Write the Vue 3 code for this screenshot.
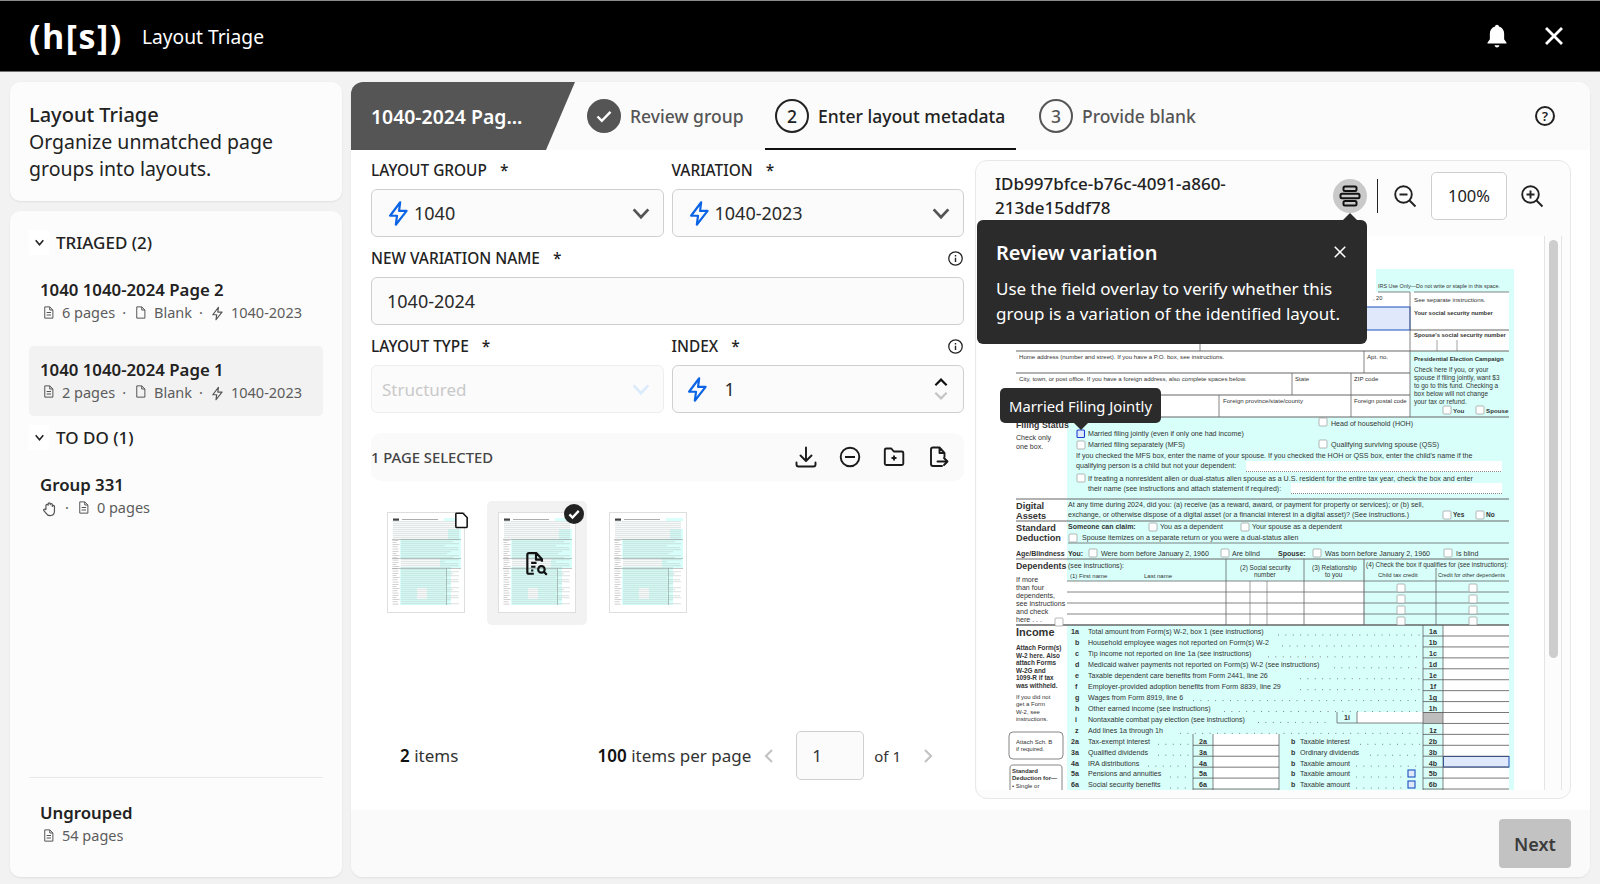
<script setup>
// Form page drawn at screen coordinates: the svg viewBox starts where the viewer's page starts
const sections = [
  { title: 'TRIAGED (2)', items: [
    { name: '1040 1040-2024 Page 2', pages: '6 pages', variation: '1040-2023' },
    { name: '1040 1040-2024 Page 1', pages: '2 pages', variation: '1040-2023', active: true },
  ] },
  { title: 'TO DO (1)', items: [
    { name: 'Group 331', pages: '0 pages', manual: true },
  ] },
]

const cyan = [
  [1376, 269, 138, 23], [1509, 292, 5, 59], [1410, 351, 104, 66], [1067, 417, 447, 373],
]
const whites = [
  [1246, 461, 256, 11], [1291, 483, 211, 11], [1067, 581, 297, 44], [1443, 625, 66, 165],
  [1357, 712, 66, 11], [1213, 734, 66, 55],
]

const hr = [
  [1016, 351, 1509, 351, 1], [1016, 373, 1410, 373, 1], [1016, 395, 1410, 395, 1], [1016, 417, 1509, 417, 1.2],
  [1016, 499, 1509, 499, 1.2], [1016, 521, 1509, 521, 1], [1068, 543, 1509, 543, .8], [1016, 559, 1509, 559, 1],
  [1067, 581, 1509, 581, .8], [1067, 592, 1509, 592, .8], [1067, 603, 1509, 603, .8], [1067, 614, 1509, 614, .8],
  [1016, 625, 1509, 625, 1.4], [1414, 292, 1509, 292, .8], [1378, 292, 1410, 292, .8], [1410, 330, 1509, 330, 1],
  [1200, 340, 1200, 351, .8], [1364, 351, 1364, 373, .8], [1410, 292, 1410, 417, .8], [1292, 373, 1292, 395, .8],
  [1351, 373, 1351, 417, .8], [1219, 395, 1219, 417, .8], [1226, 559, 1226, 625, .8], [1250, 581, 1250, 625, .6],
  [1267, 581, 1267, 625, .6], [1304, 559, 1304, 625, .8], [1364, 559, 1364, 625, 1], [1436, 568, 1436, 625, .8],
  [1423, 625, 1423, 790, .8], [1443, 625, 1443, 790, .8], [1337, 712, 1337, 723, .8], [1357, 712, 1357, 723, .8],
  [1337, 723, 1423, 723, .8], [1193, 734, 1193, 790, .8], [1213, 734, 1213, 790, .8], [1279, 734, 1279, 790, .8],
  [1437, 340, 1437, 351, .6], [1457, 340, 1457, 351, .6],
]

const boxes = [
  [1443, 406], [1476, 406], [1319, 418], [1077, 441], [1319, 440], [1077, 474], [1443, 511], [1476, 511],
  [1149, 523], [1241, 523], [1069, 534], [1089, 549], [1221, 549], [1313, 549], [1444, 549],
  [1397, 584], [1397, 595], [1397, 606], [1397, 617], [1469, 584], [1469, 595], [1469, 606], [1469, 617], [1055, 618],
]

const labels = [
  ['IRS Use Only—Do not write or staple in this space.', 1378, 288, 5.4], [', 20', 1373, 300, 5.6],
  ['See separate instructions.', 1414, 302, 6.2], ['Your social security number', 1414, 315, 5.9, 1],
  ["Spouse's social security number", 1414, 337, 5.9, 1], ['Home address (number and street). If you have a P.O. box, see instructions.', 1019, 359, 6.1],
  ['Apt. no.', 1367, 359, 6.1], ['Presidential Election Campaign', 1414, 361, 6, 1], ['Check here if you, or your', 1414, 372, 6.5],
  ['spouse if filing jointly, want $3', 1414, 380, 6.5], ['to go to this fund. Checking a', 1414, 388, 6.5], ['box below will not change', 1414, 396, 6.5],
  ['your tax or refund.', 1414, 404, 6.5], ['You', 1453, 413, 6.2, 1], ['Spouse', 1486, 413, 6.2, 1],
  ['City, town, or post office. If you have a foreign address, also complete spaces below.', 1019, 381, 6.1], ['State', 1295, 381, 6.1], ['ZIP code', 1354, 381, 6.1],
  ['Foreign province/state/county', 1223, 403, 6.1], ['Foreign postal code', 1354, 403, 6],
  ['Head of household (HOH)', 1331, 426], ['Filing Status', 1016, 428, 8.8, 1], ['Married filing jointly (even if only one had income)', 1088, 436],
  ['Check only', 1016, 440], ['one box.', 1016, 449], ['Married filing separately (MFS)', 1088, 447], ['Qualifying surviving spouse (QSS)', 1331, 447],
  ["If you checked the MFS box, enter the name of your spouse. If you checked the HOH or QSS box, enter the child's name if the", 1076, 458],
  ['qualifying person is a child but not your dependent:', 1076, 468],
  ['If treating a nonresident alien or dual-status alien spouse as a U.S. resident for the entire tax year, check the box and enter', 1088, 481],
  ['their name (see instructions and attach statement if required):', 1088, 491],
  ['Digital', 1016, 509, 9.2, 1], ['Assets', 1016, 519, 9.2, 1], ['Standard', 1016, 531, 9.2, 1], ['Deduction', 1016, 541, 9.2, 1],
  ['At any time during 2024, did you: (a) receive (as a reward, award, or payment for property or services); or (b) sell,', 1068, 507],
  ['exchange, or otherwise dispose of a digital asset (or a financial interest in a digital asset)? (See instructions.)', 1068, 517],
  ['Yes', 1453, 517, 6.6, 1], ['No', 1486, 517, 6.6, 1], ['Someone can claim:', 1068, 529, 7, 1], ['You as a dependent', 1160, 529], ['Your spouse as a dependent', 1252, 529],
  ['Spouse itemizes on a separate return or you were a dual-status alien', 1082, 540],
  ['Age/Blindness', 1016, 556, 7, 1], ['You:', 1068, 556, 7, 1], ['Were born before January 2, 1960', 1101, 556], ['Are blind', 1232, 556],
  ['Spouse:', 1278, 556, 7, 1], ['Was born before January 2, 1960', 1325, 556], ['Is blind', 1456, 556],
  ['Dependents', 1016, 569, 8.8, 1], ['(see instructions):', 1068, 568], ['(2) Social security', 1240, 570, 6.4], ['number', 1254, 577, 6.4], ['(3) Relationship', 1312, 570, 6.4], ['to you', 1325, 577, 6.4],
  ['(4) Check the box if qualifies for (see instructions):', 1366, 567, 6.4], ['Child tax credit', 1378, 577, 6], ['Credit for other dependents', 1438, 577, 5.5],
  ['(1) First name', 1070, 578, 6], ['Last name', 1144, 578, 6], ['If more', 1016, 582], ['than four', 1016, 590], ['dependents,', 1016, 598], ['see instructions', 1016, 606],
  ['and check', 1016, 614], ['here  .  .  .', 1016, 622], ['Income', 1016, 636, 11, 1],
  ['Attach Form(s)', 1016, 650, 6.4, 1], ['W-2 here. Also', 1016, 658, 6.4, 1], ['attach Forms', 1016, 665, 6.4, 1], ['W-2G and', 1016, 673, 6.4, 1],
  ['1099-R if tax', 1016, 680, 6.4, 1], ['was withheld.', 1016, 688, 6.4, 1], ['If you did not', 1016, 699, 6], ['get a Form', 1016, 706, 6], ['W-2, see', 1016, 714, 6], ['instructions.', 1016, 721, 6],
  ['Attach Sch. B', 1016, 744, 6], ['if required.', 1016, 751, 6], ['Standard', 1012, 773, 6, 1], ['Deduction for—', 1012, 780, 6, 1], ['• Single or', 1012, 788, 6],
]

// no, text, right box, where the dots start, second column: text, dots start, dots end
const income = [
  ['1a', 'Total amount from Form(s) W-2, box 1 (see instructions)', '1a', 1278],
  ['b', 'Household employee wages not reported on Form(s) W-2', '1b', 1282],
  ['c', 'Tip income not reported on line 1a (see instructions)', '1c', 1268],
  ['d', 'Medicaid waiver payments not reported on Form(s) W-2 (see instructions)', '1d', 1334],
  ['e', 'Taxable dependent care benefits from Form 2441, line 26', '1e', 1300],
  ['f', 'Employer-provided adoption benefits from Form 8839, line 29', '1f', 1300],
  ['g', 'Wages from Form 8919, line 6', '1g', 1193],
  ['h', 'Other earned income (see instructions)', '1h', 1224],
  ['i', 'Nontaxable combat pay election (see instructions)', '', 1258],
  ['z', 'Add lines 1a through 1h', '1z', 1180],
  ['2a', 'Tax-exempt interest', '2b', 1158, 'Taxable interest', 1360, 1420],
  ['3a', 'Qualified dividends', '3b', 1158, 'Ordinary dividends', 1370, 1420],
  ['4a', 'IRA distributions', '4b', 1148, 'Taxable amount', 1356, 1420],
  ['5a', 'Pensions and annuities', '5b', 1170, 'Taxable amount', 1356, 1404],
  ['6a', 'Social security benefits', '6b', 1170, 'Taxable amount', 1356, 1404],
].map((row, i) => ({
  no: row[0], text: row[1], right: row[2], dotsFrom: row[3], second: row[4], secondFrom: row[5], secondTo: row[6],
  y: 634.4 + i * 10.93, line: 636 + i * 10.93, dotY: 635 + i * 10.93,
}))

// Thumbnail of the whole page: text rows are only grey strokes at this size
const thumbRows = Array.from({ length: 42 }, (_, i) => ({
  y: 9.6 + i * 2,
  x: i < 9 ? 6 : 14,
  w: i < 9 ? 66 : [46, 58, 52, 58, 44, 57, 58, 50][i % 8],
}))
const thumbLeft = Array.from({ length: 30 }, (_, i) => ({
  y: 28 + i * 2.2,
  w: [6, 4, 7, 5, 6][i % 5],
}))
const thumbs = [{ tag: 'blank' }, { tag: 'selected', active: true }, { tag: '' }]
</script>

<template>
  <div class="app">
    <svg class="sprite" aria-hidden="true">
      <symbol id="bolt" viewBox="0 0 24 24"><path d="M13.500 2 4.500 14h6.200L9.600 22l9.600-12.300h-6.700z" fill="none" stroke="currentColor" stroke-width="1.900" stroke-linejoin="round" /></symbol>
      <symbol id="chev" viewBox="0 0 24 24"><path d="m4 8 8 8.500L20 8" fill="none" stroke="currentColor" stroke-width="3" /></symbol>
      <symbol id="doc" viewBox="0 0 24 24"><path d="M6 3h8l5 5v13H6zM14 3v5h5M9 12h7M9 16h7" fill="none" stroke="currentColor" stroke-width="1.600" stroke-linejoin="round" /></symbol>
      <symbol id="blank" viewBox="0 0 24 24"><path d="M6 3h8l5 5v13H6zM14 3v5h5" fill="none" stroke="currentColor" stroke-width="1.600" stroke-linejoin="round" /></symbol>
      <symbol id="info" viewBox="0 0 24 24"><circle cx="12" cy="12" r="9.500" fill="none" stroke="currentColor" stroke-width="1.800" /><path d="M12 11v6M12 7v2" stroke="currentColor" stroke-width="2" /></symbol>
    </svg>

    <header class="topbar">
      <span class="logo">(h[s])</span>
      <span class="app-name">Layout Triage</span>
      <div class="topbar-actions">
        <svg class="bell" viewBox="0 0 24 24"><path d="M12 1.500c1 0 1.700.7 1.800 1.700C17 4 18.600 6.600 18.600 10v5l2.200 3.200v.8H3.200v-.8L5.400 15v-5c0-3.400 1.600-6 4.800-6.800.1-1 .8-1.700 1.800-1.700zM9.800 20.500h4.400c0 1.200-1 2-2.200 2s-2.200-.8-2.200-2z" fill="#fff" /></svg>
        <svg class="close" viewBox="0 0 24 24"><path d="m4 4 16 16M20 4 4 20" stroke="#fff" stroke-width="2.800" /></svg>
      </div>
    </header>

    <div class="workspace">
      <aside class="sidebar">
        <section class="card intro">
          <h1>Layout Triage</h1>
          <p>Organize unmatched page groups into layouts.</p>
        </section>
        <section class="card groups">
          <template v-for="section in sections" :key="section.title">
            <div class="group-head">
              <span class="head-chev"><svg viewBox="0 0 24 24"><path d="m5 8 7 8 7-8" fill="none" stroke="#222" stroke-width="3" /></svg></span>
              {{ section.title }}
            </div>
            <div v-for="item in section.items" :key="item.name" class="group-item" :class="{ active: item.active }">
              <div class="item-name">{{ item.name }}</div>
              <div class="item-meta">
                <template v-if="item.manual">
                  <svg class="meta-icon hand" viewBox="0 0 24 24"><path d="M7 13V7.500a1.500 1.500 0 0 1 3 0V5.500a1.500 1.500 0 0 1 3 0V6.500a1.500 1.500 0 0 1 3 0V9a1.500 1.500 0 0 1 3 0v7c0 4-2.500 6-6 6-3 0-4.500-1-6-3.500L4 15c-.8-1.500 1.200-2.800 2.300-1.500z" fill="none" stroke="#555" stroke-width="1.700" stroke-linejoin="round" /></svg>
                  <span class="dot">·</span>
                </template>
                <svg class="meta-icon"><use href="#doc" /></svg>
                <span>{{ item.pages }}</span>
                <template v-if="item.variation">
                  <span class="dot">·</span>
                  <svg class="meta-icon"><use href="#blank" /></svg>
                  <span>Blank</span>
                  <span class="dot">·</span>
                  <svg class="meta-icon bolt-small"><use href="#bolt" /></svg>
                  <span>{{ item.variation }}</span>
                </template>
              </div>
            </div>
          </template>
          <div class="ungrouped">
            <div class="group-item">
              <div class="item-name">Ungrouped</div>
              <div class="item-meta">
                <svg class="meta-icon"><use href="#doc" /></svg>
                <span>54 pages</span>
              </div>
            </div>
          </div>
        </section>
      </aside>

      <main class="panel">
        <nav class="steps">
          <div class="doc-tab">1040-2024 Pag...</div>
          <div class="step done">
            <span class="step-circle"><svg viewBox="0 0 24 24"><path d="m5.500 12.500 4.300 4.300 8.700-9" fill="none" stroke="#fff" stroke-width="2.400" /></svg></span>
            Review group
          </div>
          <div class="step current">
            <span class="step-circle">2</span>
            Enter layout metadata
          </div>
          <div class="step todo">
            <span class="step-circle">3</span>
            Provide blank
          </div>
          <span class="help">?</span>
        </nav>

        <div class="content">
          <div class="form-col">
            <div class="fields">
              <div class="field">
                <label>LAYOUT GROUP <i>*</i></label>
                <div class="control">
                  <svg class="bolt"><use href="#bolt" /></svg>
                  <span>1040</span>
                  <svg class="chev"><use href="#chev" /></svg>
                </div>
              </div>
              <div class="field">
                <label>VARIATION <i>*</i></label>
                <div class="control">
                  <svg class="bolt"><use href="#bolt" /></svg>
                  <span>1040-2023</span>
                  <svg class="chev"><use href="#chev" /></svg>
                </div>
              </div>
              <div class="field wide">
                <label>NEW VARIATION NAME <i>*</i><svg class="info"><use href="#info" /></svg></label>
                <div class="control plain"><span>1040-2024</span></div>
              </div>
              <div class="field">
                <label>LAYOUT TYPE <i>*</i></label>
                <div class="control disabled">
                  <span>Structured</span>
                  <svg class="chev"><use href="#chev" /></svg>
                </div>
              </div>
              <div class="field">
                <label>INDEX <i>*</i><svg class="info"><use href="#info" /></svg></label>
                <div class="control index">
                  <svg class="bolt"><use href="#bolt" /></svg>
                  <span>1</span>
                  <div class="stepper">
                    <svg viewBox="0 0 24 24"><path d="m3 18 9-9 9 9" fill="none" stroke="#111" stroke-width="3.400" /></svg>
                    <svg viewBox="0 0 24 24"><path d="m3 6 9 9 9-9" fill="none" stroke="#c4c4c4" stroke-width="3.400" /></svg>
                  </div>
                </div>
              </div>
            </div>

            <div class="selection-bar">
              <span>1 PAGE SELECTED</span>
              <div class="selection-actions">
                <svg viewBox="0 0 24 24"><path d="M12 2.500v13M6.500 10.500l5.500 5.500 5.500-5.500M2.500 17.500v2c0 1.200.8 2 2 2h15c1.200 0 2-.8 2-2v-2" fill="none" stroke="#1a1a1a" stroke-width="1.900" stroke-linecap="round" stroke-linejoin="round" /></svg>
                <svg viewBox="0 0 24 24"><circle cx="12" cy="12" r="9.300" fill="none" stroke="#1a1a1a" stroke-width="1.900" /><path d="M7 12h10" stroke="#1a1a1a" stroke-width="2" /></svg>
                <svg viewBox="0 0 24 24"><path d="M2.800 5c0-.9.600-1.500 1.500-1.500h5l2.500 3h8c1 0 1.500.6 1.500 1.500v10.500c0 .9-.6 1.500-1.500 1.500H4.300c-.9 0-1.500-.6-1.500-1.500zM12 10.500v5M9.500 13h5" fill="none" stroke="#1a1a1a" stroke-width="1.900" stroke-linejoin="round" /></svg>
                <svg viewBox="0 0 24 24"><path d="M16 21H7c-1.200 0-2-.8-2-2V4.500c0-1.200.8-2 2-2h6.500l5 5.500v4M13.500 2.500V8h5M11.500 16.500h10M18 13l3.500 3.500L18 20" fill="none" stroke="#1a1a1a" stroke-width="1.900" stroke-linejoin="round" stroke-linecap="round" /></svg>
              </div>
            </div>

            <div class="thumbs">
              <div v-for="thumb in thumbs" :key="thumb.tag" class="thumb-tile" :class="{ active: thumb.active }">
                <svg class="thumb" viewBox="0 0 78 101">
                  <rect x=".5" y=".5" width="77" height="100" fill="#fff" stroke="#dedede" />
                  <path d="M57 6h17v3H57zM61 17h13v10H61zM13 27h61v66H13z" fill="#d8fffa" />
                  <path d="M13 47h40v8H13zM64 56h10v37H64zM30 76h10v11H30z" fill="#fff" />
                  <rect x="6" y="6.500" width="6" height="2.200" fill="#444" />
                  <rect x="15" y="7" width="36" height=".8" fill="#999" />
                  <rect v-for="row in thumbRows" :key="row.y" :x="row.x" :y="row.y" :width="row.w" height=".5" fill="#b4c2c0" />
                  <rect v-for="row in thumbLeft" :key="row.y" x="5.500" :y="row.y" :width="row.w" height=".5" fill="#a4a4a4" />
                  <rect x="5" y="27" width="69" height=".5" fill="#888" />
                  <rect x="5" y="46" width="69" height=".5" fill="#888" />
                  <rect x="5" y="56" width="69" height=".5" fill="#888" />
                  <rect x="59" y="56" width=".8" height="37" fill="#9fb1ae" />
                </svg>
                <svg v-if="thumb.tag === 'blank'" class="thumb-flag" viewBox="0 0 24 24"><path d="M5 2.500h9l6 6V21c0 1-.6 1.500-1.500 1.500h-13C4.600 22.500 4 22 4 21V3.500c0-.6.400-1 1-1z" fill="#fff" stroke="#111" stroke-width="2.200" stroke-linejoin="round" /></svg>
                <svg v-if="thumb.active" class="thumb-check" viewBox="0 0 24 24"><circle cx="12" cy="12" r="12" fill="#222" /><path d="m6.500 12.500 3.700 3.700 7.500-8" fill="none" stroke="#fff" stroke-width="2.800" /></svg>
                <svg v-if="thumb.active" class="thumb-view" viewBox="0 0 24 24"><path d="M10 21H5.500C4.600 21 4 20.400 4 19.500v-16C4 2.600 4.600 2 5.500 2h7l5 5.500V10M12 2v6h5.500M7.500 11h5M7.500 14.500h4M7.500 18h2" fill="none" stroke="#111" stroke-width="2" stroke-linejoin="round" /><circle cx="17" cy="17" r="3" fill="none" stroke="#111" stroke-width="2" /><path d="m19.500 19.500 2.500 2.500" stroke="#111" stroke-width="2" /></svg>
              </div>
            </div>

            <div class="pager">
              <span><b>2</b> items</span>
              <div class="pager-right">
                <span><b>100</b> items per page</span>
                <svg class="pager-chev" viewBox="0 0 24 24"><path d="M16 4 8 12l8 8" fill="none" stroke="#c4c4c4" stroke-width="3" /></svg>
                <div class="page-input">1</div>
                <span class="of">of 1</span>
                <svg class="pager-chev" viewBox="0 0 24 24"><path d="m8 4 8 8-8 8" fill="none" stroke="#c4c4c4" stroke-width="3" /></svg>
              </div>
            </div>
          </div>

          <section class="viewer">
            <div class="viewer-head">
              <div class="viewer-title">IDb997bfce-b76c-4091-a860-<br />213de15ddf78</div>
              <button class="overlay-btn">
                <svg viewBox="0 0 24 24"><g fill="none" stroke="#111" stroke-width="2"><rect x="5.500" y="2.500" width="13" height="4.500" rx="1.500" /><rect x="2.500" y="9.700" width="19" height="4.500" rx="1.500" /><rect x="5.500" y="17" width="13" height="4.500" rx="1.500" /></g></svg>
              </button>
              <span class="divider"></span>
              <svg class="zoom-icon" viewBox="0 0 24 24"><circle cx="10.500" cy="10.500" r="8.300" fill="none" stroke="#222" stroke-width="1.900" /><path d="m16.500 16.500 6 6M6.500 10.500h8" stroke="#222" stroke-width="1.900" /></svg>
              <div class="zoom-value">100%</div>
              <svg class="zoom-icon" viewBox="0 0 24 24"><circle cx="10.500" cy="10.500" r="8.300" fill="none" stroke="#222" stroke-width="1.900" /><path d="m16.500 16.500 6 6M6.500 10.500h8M10.500 6.500v8" stroke="#222" stroke-width="1.900" /></svg>
            </div>

            <div class="doc-area">
              <div class="doc-stage">
                <svg class="form-page" viewBox="977 236 567 554">
                  <rect x="977" y="236" width="567" height="554" fill="#fff" />
                  <rect v-for="r in cyan" :key="r.join()" :x="r[0]" :y="r[1]" :width="r[2]" :height="r[3]" fill="#d8fffa" />
                  <rect v-for="r in whites" :key="r.join()" :x="r[0]" :y="r[1]" :width="r[2]" :height="r[3]" fill="#fff" />
                  <rect x="1364" y="581" width="150" height="44" fill="#d8fffa" />
                  <rect x="1423" y="712" width="20" height="11" fill="#bdbdbd" />
                  <rect x="1300" y="307" width="110" height="23" fill="#dfe9fb" stroke="#1a4fc0" stroke-width="1" />
                  <rect x="1443.500" y="756.500" width="65.500" height="10.500" fill="#dfe9fb" stroke="#1a4fc0" stroke-width="1" />
                  <path d="M1246 471.500h256M1291 493.500h211" stroke="#555" stroke-width=".7" stroke-dasharray="1 1" />
                  <line v-for="l in hr" :key="l.join()" :x1="l[0]" :y1="l[1]" :x2="l[2]" :y2="l[3]" :stroke-width="l[4]" stroke="#666" />
                  <rect x="1009" y="732" width="54" height="27" rx="4" fill="#fff" stroke="#666" stroke-width=".8" />
                  <path d="M1010 790v-22c0-2 1-3 3-3h46c2 0 3 1 3 3v22" fill="none" stroke="#666" stroke-width=".8" />
                  <rect v-for="b in boxes" :key="b.join()" :x="b[0]" :y="b[1]" width="8" height="8" rx="1" fill="#fff" stroke="#999" stroke-width=".7" />
                  <rect x="1077" y="430" width="7.500" height="7.500" rx="1" fill="#dfe9fb" stroke="#1a40d0" stroke-width="1.100" />
                  <rect x="1408" y="770" width="7" height="7" fill="#dfe9fb" stroke="#1a50c0" stroke-width="1.100" />
                  <rect x="1408" y="781" width="7" height="7" fill="#dfe9fb" stroke="#1a50c0" stroke-width="1.100" />
                  <g class="form-text">
                    <text v-for="t in labels" :key="t[0] + t[2]" :x="t[1]" :y="t[2]" :font-size="t[3] || 7.100" :font-weight="t[4] ? 700 : 400">{{ t[0] }}</text>
                    <template v-for="row in income" :key="row.no">
                      <text :x="row.no.length > 1 ? 1071 : 1075" :y="row.y" font-weight="700">{{ row.no }}</text>
                      <text x="1088" :y="row.y">{{ row.text }}</text>
                      <text x="1433" text-anchor="middle" :y="row.y" font-weight="700">{{ row.right }}</text>
                      <line :x1="row.dotsFrom" :y1="row.dotY" :x2="row.second ? 1190 : (row.no === 'i' ? 1332 : 1420)" :y2="row.dotY" class="dots" />
                      <template v-if="row.second">
                        <text x="1203" text-anchor="middle" :y="row.y" font-weight="700">{{ row.no }}</text>
                        <text x="1291" :y="row.y" font-weight="700">b</text>
                        <text x="1300" :y="row.y">{{ row.second }}</text>
                        <line :x1="row.secondFrom" :y1="row.dotY" :x2="row.secondTo" :y2="row.dotY" class="dots" />
                      </template>
                      <line x1="1423" :y1="row.line" x2="1509" :y2="row.line" stroke="#555" stroke-width=".8" />
                      <line v-if="row.second" x1="1193" :y1="row.line" x2="1279" :y2="row.line" stroke="#555" stroke-width=".8" />
                    </template>
                    <text x="1347" y="720" text-anchor="middle" font-weight="700">1i</text>
                  </g>
                </svg>

                <div class="hint">
                  Married Filing Jointly
                  <span class="hint-arrow"></span>
                </div>
              </div>
              <div class="scroll-track"><div class="scroll-thumb"></div></div>
            </div>

            <div class="popover">
              <span class="popover-arrow"></span>
              <div class="popover-head">
                <strong>Review variation</strong>
                <svg viewBox="0 0 24 24"><path d="m5 5 14 14M19 5 5 19" stroke="#fff" stroke-width="2" /></svg>
              </div>
              <p>Use the field overlay to verify whether this group is a variation of the identified layout.</p>
            </div>
          </section>
        </div>

        <footer class="panel-foot">
          <button class="next">Next</button>
        </footer>
      </main>
    </div>
  </div>
</template>

<style scoped>
.app {
  width: 1600px;
  height: 884px;
  display: flex;
  flex-direction: column;
  background: #f2f2f2;
  color: #222;
  font-family: "Noto Sans", "Open Sans", sans-serif;
  overflow: hidden;
}
.sprite { display: none; }

/* Top bar */
.topbar {
  height: 72px;
  box-sizing: border-box;
  border-top: 1px solid #8a8a8a;
  border-bottom: 1px solid #6f6f6f;
  background: #000;
  color: #fff;
  display: flex;
  align-items: center;
  padding: 0 34px 0 29px;
}
.logo {
  font-family: "Open Sans", sans-serif;
  font-weight: 700;
  font-size: 34px;
  letter-spacing: 1.500px;
  width: 113px;
}
.app-name { font-size: 19.200px; }
.topbar-actions {
  margin-left: auto;
  display: flex;
  align-items: center;
  gap: 32px;
}
.bell { width: 26px; height: 26px; }
.close { width: 24px; height: 24px; }

.workspace {
  flex: 1;
  min-height: 0;
  display: flex;
  gap: 9px;
  padding: 10px 10px 7px;
}

/* Sidebar */
.sidebar {
  width: 332px;
  flex: none;
  display: flex;
  flex-direction: column;
  gap: 10px;
}
.card {
  background: #fcfcfc;
  border-radius: 10px;
  box-shadow: 0 1px 2px rgba(0, 0, 0, 0.08);
}
.intro {
  height: 119px;
  box-sizing: border-box;
  padding: 20px 40px 0 19px;
}
.intro h1 {
  margin: 0;
  font-size: 20px;
  font-weight: 500;
  line-height: 26px;
}
.intro p {
  margin: 0;
  font-size: 19.500px;
  line-height: 27px;
}
.groups {
  flex: 1;
  display: flex;
  flex-direction: column;
  padding: 19px 19px 18px;
}
.group-head {
  height: 25px;
  display: flex;
  align-items: center;
  gap: 7px;
  font-size: 17px;
  font-weight: 500;
  margin-bottom: 11px;
}
.head-chev {
  width: 20px;
  height: 25px;
  background: #fff;
  display: flex;
  align-items: center;
  justify-content: center;
}
.head-chev svg { width: 13px; height: 13px; }
.group-item {
  height: 70px;
  box-sizing: border-box;
  padding: 13px 11px;
  border-radius: 5px;
  margin-bottom: 9.500px;
}
.group-item.active { background: #f2f2f2; }
.item-name {
  font-size: 16.800px;
  font-weight: 600;
  line-height: 22px;
}
.item-meta {
  display: flex;
  align-items: center;
  gap: 6px;
  padding-left: 1px;
  font-size: 14.500px;
  line-height: 22px;
  color: #5c5c5c;
}
.meta-icon {
  width: 15px;
  height: 15px;
  flex: none;
  color: #555;
}
.meta-icon.hand { width: 17px; height: 17px; margin-top: 3px; }
.bolt-small { margin-top: 3px; }
.dot { margin: 0 1px; }
.ungrouped {
  margin-top: auto;
  border-top: 1px solid #e8e8e8;
  padding-top: 11px;
}
.ungrouped .group-item { margin-bottom: 0; }

/* Main panel */
.panel {
  flex: 1;
  min-width: 0;
  display: flex;
  flex-direction: column;
  background: #fff;
  border-radius: 12px;
  box-shadow: 0 1px 2px rgba(0, 0, 0, 0.08);
  overflow: hidden;
}
.steps {
  height: 68px;
  flex: none;
  display: flex;
  align-items: stretch;
  background: #fbfbfb;
  font-size: 17.500px;
  font-weight: 500;
  white-space: nowrap;
}
.doc-tab {
  width: 224px;
  box-sizing: border-box;
  padding-left: 20px;
  margin-right: 12px;
  background: #555;
  clip-path: polygon(0 0, 100% 0, 195px 100%, 0 100%);
  color: #fff;
  font-size: 19.400px;
  font-weight: 600;
  display: flex;
  align-items: center;
}
.step {
  display: flex;
  align-items: center;
  gap: 9px;
  color: #555;
  padding: 0 10px 2px;
  height: 68px;
  box-sizing: border-box;
}
.step.done { padding: 0; margin-right: 22px; width: 156px; }
.step.current {
  width: 251px;
  color: #222;
  border-bottom: 2px solid #111;
  margin-right: 23px;
  padding: 2px 10px 0 10px;
}
.step.todo { padding: 0; }
.step-circle {
  width: 34px;
  height: 34px;
  box-sizing: border-box;
  border-radius: 50%;
  border: 2px solid currentColor;
  display: flex;
  align-items: center;
  justify-content: center;
  flex: none;
}
.step.done .step-circle { background: #555; }
.step.done .step-circle svg { width: 24px; height: 24px; }
.help {
  margin: auto 35px auto auto;
  width: 20px;
  height: 20px;
  box-sizing: border-box;
  border: 2px solid #222;
  border-radius: 50%;
  font-size: 13px;
  font-weight: 600;
  line-height: 16px;
  text-align: center;
  color: #222;
}
.content {
  flex: 1;
  min-height: 0;
  display: flex;
  gap: 11px;
  padding: 10px 19px 11px 20px;
}
.form-col {
  width: 593px;
  flex: none;
  display: flex;
  flex-direction: column;
}
.fields {
  display: grid;
  grid-template-columns: 1fr 1fr;
  gap: 11px 8px;
}
.field.wide { grid-column: span 2; }
.field label {
  height: 20px;
  margin-bottom: 9px;
  display: flex;
  align-items: center;
  font-size: 15.400px;
  font-weight: 500;
  color: #222;
}
.field label i {
  font-style: normal;
  margin-left: 13px;
}
.info {
  width: 17px;
  height: 17px;
  margin-left: auto;
}
.control {
  height: 48px;
  box-sizing: border-box;
  display: flex;
  align-items: center;
  gap: 2px;
  padding: 0 11px 0 13px;
  background: #fbfbfb;
  border: 1.500px solid #cfcfcf;
  border-radius: 6px;
  font-size: 18px;
  color: #2a2a2a;
}
.control.plain { padding-left: 15px; }
.bolt {
  width: 27px;
  height: 27px;
  flex: none;
  color: #0b63e5;
}
.chev {
  width: 22px;
  height: 22px;
  margin-left: auto;
  color: #555;
}
.control.disabled {
  border-color: #eeeeee;
  color: #c9c9c9;
  font-size: 17px;
  padding-left: 10px;
}
.control.disabled .chev { color: #dcebfb; }
.control.index { gap: 14px; padding-left: 11px; }
.stepper {
  margin-left: auto;
  display: flex;
  flex-direction: column;
}
.stepper svg { width: 22px; height: 15px; }
.selection-bar {
  margin-top: 20px;
  height: 48px;
  flex: none;
  display: flex;
  align-items: center;
  justify-content: space-between;
  background: #fafafa;
  border-radius: 10px;
  font-size: 14.800px;
  font-weight: 500;
  color: #444;
}
.selection-actions {
  display: flex;
  gap: 20px;
  padding-right: 14px;
}
.selection-actions svg { width: 24px; height: 24px; }
.thumbs {
  margin-top: 20px;
  padding-left: 5px;
  display: flex;
  gap: 11px;
}
.thumb-tile {
  width: 100px;
  height: 124px;
  box-sizing: border-box;
  padding: 11px;
  border-radius: 5px;
  position: relative;
}
.thumb-tile.active { background: #f2f2f2; }
.thumb {
  display: block;
  width: 78px;
  height: 101px;
  filter: blur(0.3px);
}
.thumb-flag {
  position: absolute;
  top: 9px;
  right: 6px;
  width: 17px;
  height: 20px;
}
.thumb-check {
  position: absolute;
  top: 3px;
  right: 3px;
  width: 20px;
  height: 20px;
}
.thumb-view {
  position: absolute;
  top: 50px;
  left: 36px;
  width: 26px;
  height: 26px;
}
.pager {
  margin-top: auto;
  margin-bottom: 19px;
  padding: 0 27px 0 29px;
  display: flex;
  align-items: center;
  justify-content: space-between;
  font-size: 17px;
  color: #333;
}
.pager b {
  font-weight: 600;
  color: #111;
}
.pager-right {
  display: flex;
  align-items: center;
}
.pager-chev {
  width: 18px;
  height: 18px;
  margin-left: 9px;
}
.page-input {
  width: 68px;
  height: 49px;
  box-sizing: border-box;
  margin-left: 18px;
  padding-left: 15px;
  border: 1.500px solid #cfcfcf;
  border-radius: 5px;
  background: #fbfbfb;
  display: flex;
  align-items: center;
}
.of {
  margin-left: 10px;
  font-size: 15px;
  margin-right: 9px;
}

/* Document viewer */
.viewer {
  flex: 1;
  min-width: 0;
  position: relative;
  display: flex;
  flex-direction: column;
  border: 1px solid #e8e8e8;
  border-radius: 12px;
  background: #fcfcfc;
}
.viewer-head {
  height: 75px;
  box-sizing: border-box;
  flex: none;
  display: flex;
  align-items: center;
  padding: 0 26px 6px 19px;
}
.viewer-title {
  width: 300px;
  font-size: 17px;
  font-weight: 500;
  line-height: 24px;
}
.overlay-btn {
  margin-left: auto;
  width: 34px;
  height: 34px;
  padding: 5px;
  border: 0;
  border-radius: 50%;
  background: #c9c9c9;
}
.overlay-btn svg { display: block; width: 24px; height: 24px; }
.divider {
  width: 1px;
  height: 34px;
  background: #222;
  margin: 0 15px 0 10px;
}
.zoom-icon { width: 24px; height: 24px; }
.zoom-value {
  width: 76px;
  height: 48px;
  box-sizing: border-box;
  margin: 0 13px 0 14px;
  display: flex;
  align-items: center;
  justify-content: center;
  border: 1.500px solid #cfcfcf;
  border-radius: 5px;
  background: #fff;
  font-size: 16.500px;
}
.doc-area {
  height: 554px;
  display: flex;
  margin: 0 8px 0 1px;
}
.doc-stage {
  position: relative;
  width: 567px;
  flex: none;
  overflow: hidden;
}
.form-page {
  display: block;
  width: 567px;
  height: 554px;
}
.form-text {
  font-family: "Liberation Sans", Arial, sans-serif;
  font-size: 7.100px;
  fill: #333;
}
.dots {
  stroke: #666;
  stroke-width: 0.900;
  stroke-dasharray: 0.900 6.500;
}
.hint {
  position: absolute;
  left: 23px;
  top: 152px;
  width: 161px;
  height: 35px;
  box-sizing: border-box;
  display: flex;
  align-items: center;
  justify-content: center;
  background: #2b2b2b;
  border-radius: 5px;
  color: #fff;
  font-size: 14.800px;
  white-space: nowrap;
}
.hint-arrow {
  position: absolute;
  left: 74px;
  bottom: -7px;
  border: 7px solid transparent;
  border-bottom: 0;
  border-top-color: #2b2b2b;
}
.scroll-track {
  width: 18px;
  flex: none;
  box-sizing: border-box;
  border-left: 1px solid #e4e4e4;
  border-right: 1px solid #e4e4e4;
  background: #fcfcfc;
  padding: 4px 3px 0 4px;
}
.scroll-thumb {
  height: 418px;
  background: #cdcdcd;
  border-radius: 5px;
}
.popover {
  position: absolute;
  left: 1px;
  top: 59px;
  width: 390px;
  height: 124px;
  box-sizing: border-box;
  padding: 17px 19px;
  background: #2b2b2b;
  border-radius: 6px;
  color: #fff;
}
.popover-arrow {
  position: absolute;
  left: 366px;
  top: -7px;
  border: 7px solid transparent;
  border-top: 0;
  border-bottom-color: #2b2b2b;
}
.popover-head {
  display: flex;
  align-items: center;
  justify-content: space-between;
  height: 30px;
  margin-bottom: 9px;
}
.popover-head strong {
  font-size: 20px;
  font-weight: 600;
}
.popover-head svg {
  width: 18px;
  height: 18px;
  margin-right: -1px;
}
.popover p {
  margin: 0;
  font-size: 17px;
  line-height: 25px;
}

.panel-foot {
  height: 67px;
  flex: none;
  box-sizing: border-box;
  padding: 9px 19px 0 0;
  display: flex;
  justify-content: flex-end;
  align-items: flex-start;
  background: #fafafa;
}
.next {
  width: 72px;
  height: 49px;
  border: 0;
  border-radius: 4px;
  background: #c2c2c2;
  color: #3c3c3c;
  font-family: inherit;
  font-size: 18px;
  font-weight: 600;
}
</style>

<style>
html, body { margin: 0; background: #f2f2f2; }
</style>
